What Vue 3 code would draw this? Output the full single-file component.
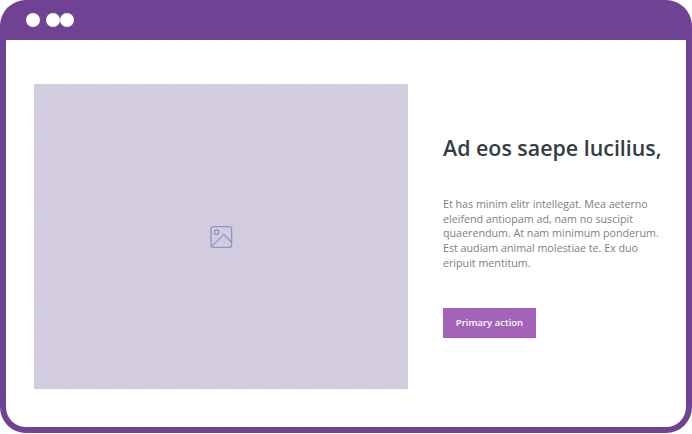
<script setup>
const dots = [0, 1, 2]
</script>

<template>
  <div class="frame">
    <div class="titlebar">
      <span v-for="d in dots" :key="d" class="dot" :class="{ tight: d === 2 }"></span>
    </div>
    <div class="content">
      <div class="picture">
        <svg width="24" height="24" viewBox="0 0 24 24" fill="none" stroke="#8f96c6" stroke-width="1.3">
          <rect x="2" y="1.6" width="20.6" height="20.8" rx="2.4" />
          <circle cx="7.6" cy="7.2" r="2.2" />
          <path d="M2.2 21.6 L14.8 9.6 L22.4 17.2" />
        </svg>
      </div>
      <div class="text">
        <h1>Ad eos saepe lucilius,</h1>
        <p>Et has minim elitr intellegat. Mea aeterno eleifend antiopam ad, nam no suscipit quaerendum. At nam minimum ponderum. Est audiam animal molestiae te. Ex duo eripuit mentitum.</p>
        <button>Primary action</button>
      </div>
    </div>
  </div>
</template>

<style>
html, body {
  margin: 0;
  background: #ffffff;
}
</style>

<style scoped>
.frame {
  box-sizing: border-box;
  width: 692px;
  height: 433px;
  padding: 0 6px 6px;
  border-radius: 26px;
  background: #6f4293;
  display: flex;
  flex-direction: column;
  font-family: "Open Sans", "Noto Sans", sans-serif;
}

.titlebar {
  height: 40px;
  flex: none;
  display: flex;
  align-items: center;
  gap: 6px;
  padding-left: 20px;
}

.dot {
  width: 14px;
  height: 14px;
  border-radius: 50%;
  background: #ffffff;
}

.dot.tight {
  margin-left: -6px;
}

.content {
  flex: 1;
  display: flex;
  padding: 44px 0 0 28px;
  background: #ffffff;
  border-radius: 0 0 20px 20px;
}

.picture {
  width: 374px;
  height: 305px;
  flex: none;
  display: flex;
  align-items: center;
  justify-content: center;
  background: repeating-linear-gradient(35deg, #d1cbdd 0 3px, #d3cedf 3px 6px);
}

.text {
  margin-left: 35px;
  width: 222px;
  flex: none;
}

h1 {
  margin: 49px 0 0;
  font-size: 21.4px;
  line-height: 30px;
  font-weight: 600;
  color: #343d42;
  white-space: nowrap;
}

p {
  margin: 34px 0 0;
  font-size: 10.7px;
  line-height: 14.7px;
  color: #7b7f83;
}

button {
  display: block;
  margin-top: 37px;
  width: 93px;
  height: 30px;
  padding: 0;
  border: none;
  background: #a263b8;
  color: #ffffff;
  font-family: inherit;
  font-size: 9.5px;
  font-weight: 600;
}
</style>
